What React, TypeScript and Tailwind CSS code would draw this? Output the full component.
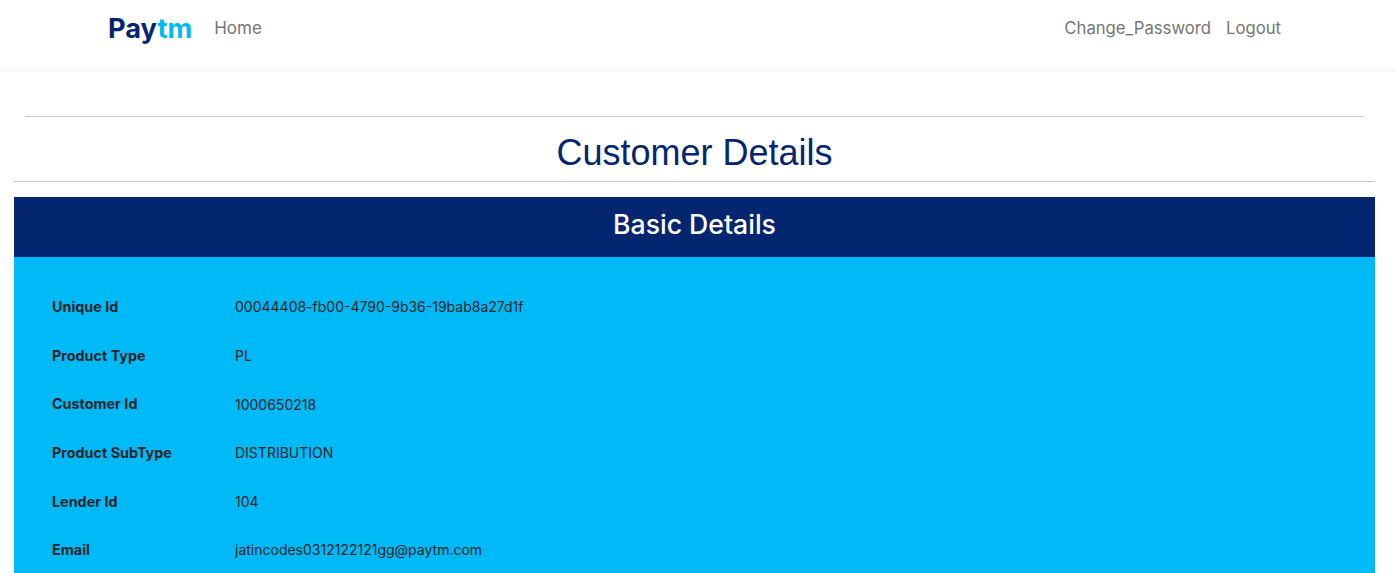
const rows = [
  ["Unique Id", "00044408-fb00-4790-9b36-19bab8a27d1f"],
  ["Product Type", "PL"],
  ["Customer Id", "1000650218"],
  ["Product SubType", "DISTRIBUTION"],
  ["Lender Id", "104"],
  ["Email", "jatincodes0312122121gg@paytm.com"],
];

export default function App() {
  return (
    <div className="h-[573px] overflow-hidden bg-white font-['Inter',sans-serif] text-[#212529]">
      <nav className="flex h-[72px] items-start justify-between border-b-4 border-[#f8f8f8] bg-white pl-[108px] pr-[116px] pt-[12px]">
        <div className="flex items-center gap-[22px]">
          <span className="text-[27.2px] font-bold leading-[33px] text-[#042570]">
            Pay<span className="text-[#00b9f5]">tm</span>
          </span>
          <a className="text-[17px] text-[#757575]">Home</a>
        </div>
        <div className="flex h-[33px] items-center gap-[15px] text-[16.7px] text-[#757575]">
          <a>Change_Password</a>
          <a>Logout</a>
        </div>
      </nav>
      <main className="pl-[14px] pr-[22px] pt-[44px]">
        <div className="mx-[11px] border-t border-[#c8c8c8]" />
        <h1 className="h-[64px] text-center font-['Liberation_Sans',sans-serif] text-[36px] leading-[71px] text-[#042570]">
          Customer Details
        </h1>
        <div className="border-t border-[#c8c8c8]" />
        <h2 className="mt-[15px] flex h-[60px] items-center justify-center bg-[#042570] pb-[5px] text-[26.6px] font-medium text-white">
          Basic Details
        </h2>
        <section className="flex flex-col bg-[#00b9f7] pb-[40px] pl-[38px] pt-[25.7px] text-[14px]">
          {rows.map(([label, value]) => (
            <div key={label} className="flex h-[48.6px] items-center">
              <span className="w-[183px] text-[14.35px] font-bold">{label}</span>
              <span>{value}</span>
            </div>
          ))}
        </section>
      </main>
    </div>
  );
}
